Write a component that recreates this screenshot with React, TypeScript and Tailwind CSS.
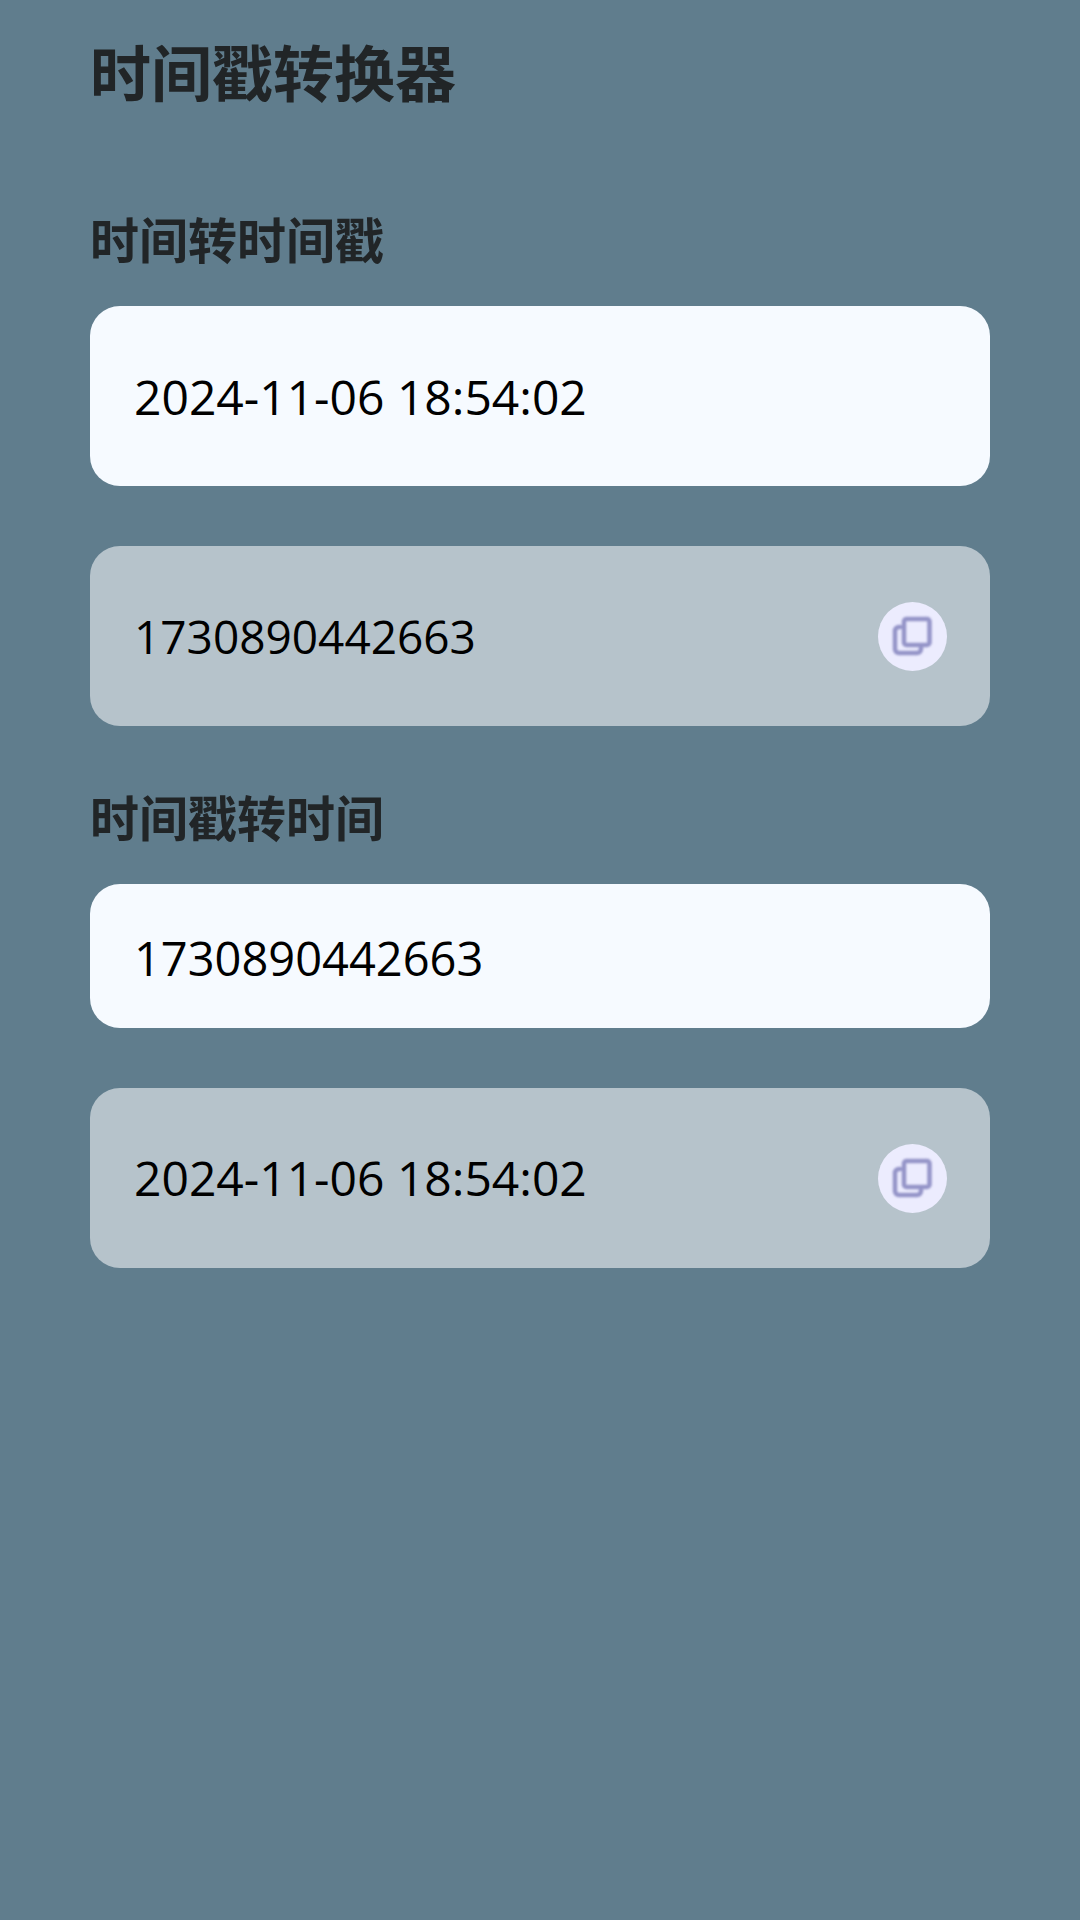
import { useState } from 'react';

const CopyIcon = () => (
  <svg viewBox="0 0 69 69" className="w-full h-full blur-[1px]" fill="none" aria-hidden="true">
    <g stroke="#9494c8" strokeWidth="4.5" strokeLinecap="round" strokeLinejoin="round">
      <path d="M22 25h-1a4 4 0 0 0-4 4V47a4 4 0 0 0 4 4h18a4 4 0 0 0 4-4v-1" />
      <rect x="26" y="17" width="25.5" height="26" rx="2.5" />
    </g>
  </svg>
);

interface FieldProps {
  id: string;
  value: string;
  className: string;
  onChange: (value: string) => void;
}

const Field = ({ id, value, className, onChange }: FieldProps) => (
  <input
    id={id}
    type="text"
    value={value}
    onChange={(e) => onChange(e.target.value)}
    className={`block w-full rounded-[30px] bg-[#f6faff] px-11 text-black outline-none ${className}`}
  />
);

interface ResultProps {
  label: string;
  value: string;
  className: string;
}

const Result = ({ label, value, className }: ResultProps) => (
  <div className="mt-[60px] flex h-[180px] items-center justify-between rounded-[30px] bg-[#b6c3cb] pr-[43px] pl-11">
    <output aria-label={label} className={`text-black ${className}`}>{value}</output>
    <button
      type="button"
      aria-label="复制"
      onClick={() => navigator.clipboard?.writeText(value)}
      className="size-[69px] shrink-0 rounded-full bg-[#ececfe]"
    >
      <CopyIcon />
    </button>
  </div>
);

const App = () => {
  const [time, setTime] = useState('2024-11-06 18:54:02');
  const [stamp, setStamp] = useState('1730890442663');

  return (
    <main className="min-h-screen bg-[#607d8d] px-[90px] pt-[34px] font-['Open_Sans','Noto_Sans_CJK_SC',sans-serif] text-[#212527]">
      <h1 className="text-[61px] leading-[80px] font-bold">时间戳转换器</h1>

      {/* Time to timestamp */}
      <section className="mt-[98px]">
        <h2 className="mb-[38px] text-[49px] leading-[56px] font-bold">
          <label htmlFor="time">时间转时间戳</label>
        </h2>
        <Field id="time" value={time} onChange={setTime} className="h-[180px] text-[48px]" />
        <Result label="时间戳" value="1730890442663" className="text-[46px]" />
      </section>

      {/* Timestamp to time */}
      <section className="mt-16">
        <h2 className="mb-[38px] text-[49px] leading-[56px] font-bold">
          <label htmlFor="stamp">时间戳转时间</label>
        </h2>
        <Field id="stamp" value={stamp} onChange={setStamp} className="h-[144px] pt-1 text-[47px]" />
        <Result label="时间" value="2024-11-06 18:54:02" className="text-[48px]" />
      </section>
    </main>
  );
};

export default App;
